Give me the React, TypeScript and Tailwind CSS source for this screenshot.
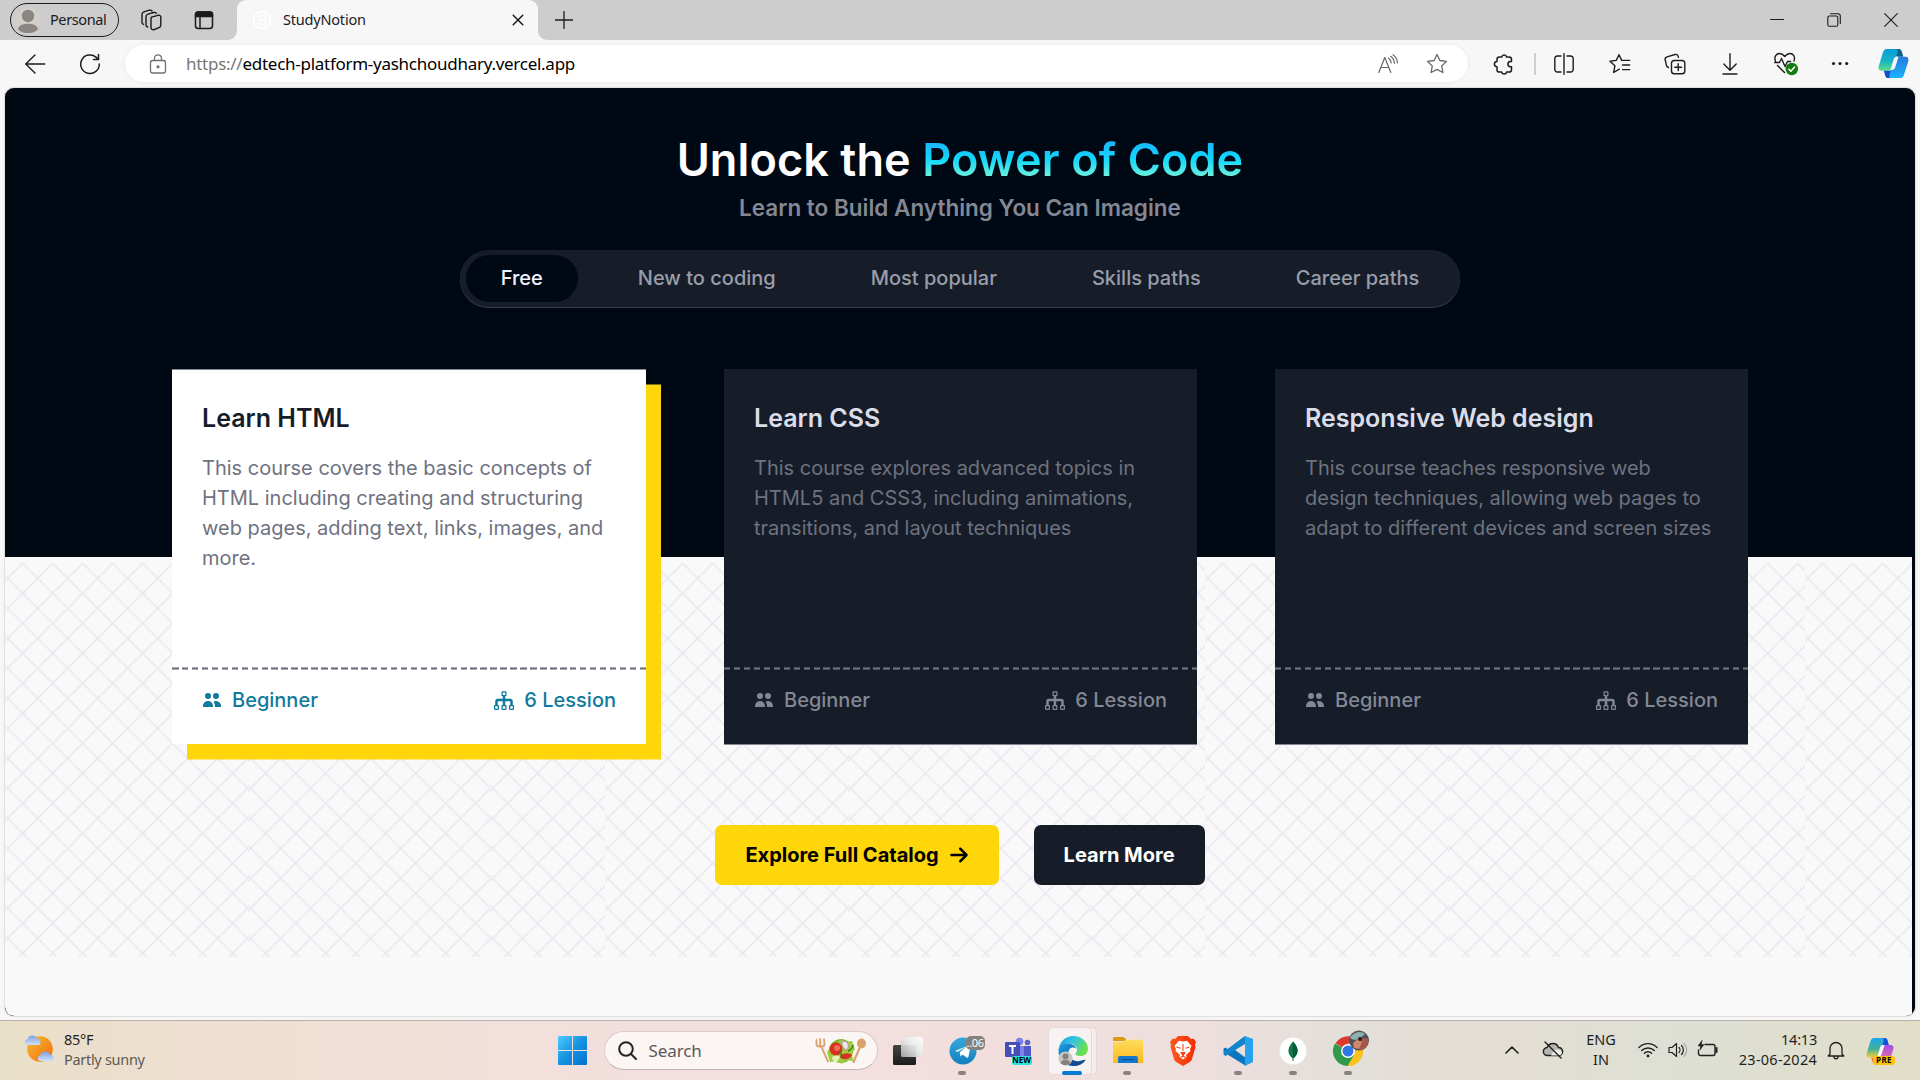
import React from "react";
import { HiUsers } from "react-icons/hi";
import { ImTree } from "react-icons/im";
import { FaArrowRight } from "react-icons/fa6";

const line = {
  fill: "none",
  stroke: "currentColor",
  strokeLinecap: "round" as const,
  strokeLinejoin: "round" as const,
};

function Cell({ className, children }: { className: string; children?: React.ReactNode }) {
  return <div className={"flex h-full shrink-0 items-center justify-center " + className}>{children}</div>;
}

/* ---------- Browser tab strip ---------- */

function TabStrip() {
  return (
    <div className="flex h-10 w-full items-center bg-[#cdcdcd] text-[#1b1b1b]">
      <div className="ml-[10px] flex h-[34px] w-[109px] shrink-0 items-center rounded-full border-[1.5px] border-[#1b1b1b] pl-[4px]">
        <svg width="26" height="26" viewBox="0 0 26 26" className="shrink-0">
          <circle cx="13" cy="13" r="13" fill="#d3d0cc" />
          <circle cx="13" cy="9" r="6.2" fill="#8b8682" />
          <path d="M3 22.2C3.600 18.500 7.500 16.800 13 16.800s9.400 1.700 10 5.400A13 13 0 0 1 13 26a13 13 0 0 1-10-3.800z" fill="#8b8682" />
        </svg>
        <span className="ml-[9px] text-[14.5px] tracking-[-0.4px]">Personal</span>
      </div>
      <Cell className="ml-[20px] w-6">
        <svg width="24" height="24" viewBox="0 0 24 24" {...line} strokeWidth="1.4">
          <path d="M12.500 9.200 19 7.300c1.500-.4 2.800.3 2.800 1.900v8c0 1.300-.6 2-1.800 2.400l-4.700 1.900c-1.800.6-3.300-.2-3.300-1.900v-8.700c0-.9.200-1.500.5-1.700z" />
          <path d="M8.700 19c-1.200-.3-1.700-1-1.700-2.100V8.800c0-1.400.7-2.200 2-2.600l5.700-1.700c1.200-.3 2.100 0 2.600.8" />
          <path d="M4.500 16.400C3.400 16 3 15.300 3 14.300V6.500c0-1.400.6-2.200 1.900-2.600l5.500-1.700c1.200-.3 2 0 2.600.8" />
        </svg>
      </Cell>
      <Cell className="ml-[31px] w-5">
        <svg width="20" height="20" viewBox="0 0 20 20" {...line} strokeWidth="1.500">
          <rect x="1.500" y="2" width="17" height="16.500" rx="2.800" />
          <path d="M1.500 5.500V4.500A2.500 2.500 0 0 1 4 2h12a2.500 2.500 0 0 1 2.500 2.500v2h-17z" fill="currentColor" />
          <path d="M6 7v11" />
        </svg>
      </Cell>
      <div className="ml-[13px] flex h-10 w-[322px] shrink-0">
        <svg width="10" height="40" viewBox="0 0 10 40" className="shrink-0">
          <path d="M0 40c6 0 10-4 10-10v10z" fill="#f7f7f7" />
        </svg>
        <div className="flex h-10 w-[301px] items-center rounded-t-[9px] bg-[#f7f7f7]">
          <svg width="20" height="20" viewBox="0 0 20 20" className="ml-[15px] shrink-0" {...line} stroke="#fff" strokeWidth="1.6">
            <circle cx="10" cy="10" r="8.500" strokeDasharray="5 1.500" />
            <path d="M13.500 6.600C12 5 7 5 7 7.800c0 3 6.200 1.500 6.200 4.600 0 2.700-5 2.700-6.800.8" />
          </svg>
          <span className="ml-[11px] text-[14.500px] tracking-[-0.200px]">StudyNotion</span>
          <svg width="12" height="12" viewBox="0 0 12 12" className="ml-auto mr-[14px]" {...line} strokeWidth="1.5">
            <path d="M1.200 1.200l9.600 9.600M10.800 1.200 1.200 10.800" />
          </svg>
        </div>
        <svg width="10" height="40" viewBox="0 0 10 40" className="shrink-0">
          <path d="M10 40C4 40 0 36 0 30v10z" fill="#f7f7f7" />
        </svg>
      </div>
      <svg width="18" height="18" viewBox="0 0 18 18" className="ml-[6px] shrink-0" {...line} strokeWidth="1.3">
        <path d="M9 .5v17M.5 9h17" />
      </svg>
      <div className="ml-auto flex h-full items-center">
        <Cell className="w-[57px]">
          <svg width="14" height="14" viewBox="0 0 14 14" {...line} strokeWidth="1.1"><path d="M.5 6.500h13" /></svg>
        </Cell>
        <Cell className="w-[57px]">
          <svg width="14" height="14" viewBox="0 0 14 14" {...line} strokeWidth="1.100">
            <rect x=".8" y="3" width="10" height="10.200" rx="1.500" />
            <path d="M3.500.8H11A2.300 2.300 0 0 1 13.300 3v7.500" />
          </svg>
        </Cell>
        <Cell className="w-[58px]">
          <svg width="14" height="14" viewBox="0 0 14 14" {...line} strokeWidth="1.100"><path d="m.7.7 12.600 12.600M13.300.7.7 13.300" /></svg>
        </Cell>
      </div>
    </div>
  );
}

/* ---------- Browser toolbar ---------- */

const starPath = "M11 1.500l2.900 6 6.600.9-4.800 4.600 1.200 6.500L11 16.400l-5.900 3.100 1.200-6.500L1.500 8.400l6.600-.9z";

function Toolbar() {
  return (
    <div className="flex h-12 w-full items-center bg-[#f7f7f7] pb-px text-[#1d1d1d]">
      <Cell className="ml-[23px] w-6">
        <svg width="22" height="22" viewBox="0 0 22 22" {...line} strokeWidth="1.400"><path d="M11 2 1.700 11l9.300 9M2 11h18.700" /></svg>
      </Cell>
      <Cell className="ml-[31px] w-6">
        <svg width="22" height="22" viewBox="0 0 22 22" {...line} strokeWidth="1.500"><path d="M20.300 11A9.300 9.300 0 1 1 17 4.100l2.500 2.400M19.500 1.500v5h-5" /></svg>
      </Cell>
      <div className="ml-[23px] flex h-[37px] w-[1343px] shrink-0 items-center rounded-full bg-white shadow-[0_0_4px_rgba(0,0,0,0.07)]">
        <svg width="18" height="20" viewBox="0 0 18 20" className="ml-[24px]" {...line} stroke="#707070" strokeWidth="1.300">
          <rect x="1.500" y="6.500" width="15" height="12.500" rx="2.200" />
          <path d="M5.500 6.500V4.300a3.500 3.500 0 0 1 7 0v2.200" />
          <circle cx="9" cy="12.800" r="1" fill="#707070" />
        </svg>
        <span className="ml-[19px] whitespace-nowrap text-[17px] tracking-[-0.270px] text-black"><span className="text-[#767676]">https://</span>edtech-platform-yashchoudhary.vercel.app</span>
        <svg width="20" height="20" viewBox="0 0 20 20" className="ml-auto mr-[28px]" {...line} stroke="#666" strokeWidth="1.200">
          <path d="M.8 18.500 6.800 3.500l6 15M2.800 13.500h8" />
          <path d="M10.500 4c1.600 1.200 2.500 2.800 2.700 5M12.700 2.300c2.300 1.700 3.500 4 3.700 7M15 .8c2.800 2 4.200 4.500 4.400 8" />
        </svg>
        <svg width="22" height="22" viewBox="0 0 22 22" className="mr-[20px]" {...line} stroke="#666" strokeWidth="1.300"><path d={starPath} /></svg>
      </div>
      <Cell className="ml-[25px] w-[22px]">
        <svg width="22" height="22" viewBox="0 0 22 22" {...line} strokeWidth="1.500">
          <path d="M4 6.500c0-1.500.9-2.400 2.300-2.400h2.400a2.500 2.500 0 0 1 4.900 0h2.500c1.500 0 2.400.9 2.400 2.400v2h-1a2.600 2.600 0 0 0 0 5.200h1v3c0 1.500-.9 2.400-2.400 2.400h-2.500a2.500 2.500 0 0 1-4.900 0H6.300C4.900 19.100 4 18.200 4 16.700v-3a2.600 2.600 0 0 1 0-5.200z" />
        </svg>
      </Cell>
      <div className="ml-[19px] h-[22px] w-[2px] bg-[#cfcfcf]" />
      <Cell className="ml-[17px] w-[22px]">
        <svg width="22" height="22" viewBox="0 0 22 22" {...line} strokeWidth="1.400">
          <path d="M8 3H4.500A2.700 2.700 0 0 0 1.800 5.700v10.600A2.700 2.700 0 0 0 4.500 19H8M14 3h3.500a2.700 2.700 0 0 1 2.700 2.700v10.600a2.700 2.700 0 0 1-2.700 2.700H14M11 .8v20.400" />
        </svg>
      </Cell>
      <Cell className="ml-[34px] w-[22px]">
        <svg width="22" height="22" viewBox="0 0 22 22" {...line} strokeWidth="1.400">
          <path d="M10.300 16.200 4.700 19.500l1.200-6.700L1 8.300l6.200-.9L10 1.700l2.700 5.700h8M13.500 12h7.200M13.500 16.600h7.200" />
        </svg>
      </Cell>
      <Cell className="ml-[33px] w-[22px]">
        <svg width="22" height="22" viewBox="0 0 22 22" {...line} strokeWidth="1.400">
          <rect x="7.500" y="7.500" width="13.300" height="13.300" rx="2.800" />
          <path d="M14.200 10.800v6.800M10.800 14.200h6.800M4.500 14.500c-1-.2-1.600-.8-1.900-1.700L1.200 7c-.4-1.400.3-2.700 1.800-3.200L11 1.500c1.400-.4 2.600.2 3 1.400l.4 1.400" />
        </svg>
      </Cell>
      <Cell className="ml-[33px] w-[22px]">
        <svg width="22" height="22" viewBox="0 0 22 22" {...line} strokeWidth="1.400"><path d="M11 .8v16M4.800 11l6.200 6.200 6.200-6.200M4 21h14" /></svg>
      </Cell>
      <Cell className="ml-[32px] w-[26px]">
        <svg width="26" height="26" viewBox="0 0 26 26" {...line} strokeWidth="1.400">
          <path d="M2.500 10.500c-1.800-5 .8-8 4.200-8C9 2.500 10.500 4 11.800 5.500 13 4 14.500 2.500 16.800 2.500c3.500 0 5.700 3 4.200 7.500M4.500 14.500l7 7M1.800 11.500h4.700l2-4 3.500 8 2.500-5h3" />
          <circle cx="18.800" cy="18" r="6.200" fill="#107c10" stroke="none" />
          <path d="m15.900 18.200 2 2 3.700-4.200" stroke="#fff" strokeWidth="1.600" />
        </svg>
      </Cell>
      <Cell className="ml-[32px] w-[18px]">
        <svg width="18" height="5" viewBox="0 0 18 5" fill="currentColor"><circle cx="2.500" cy="2.500" r="1.600" /><circle cx="9" cy="2.500" r="1.600" /><circle cx="15.700" cy="2.500" r="1.600" /></svg>
      </Cell>
      <Cell className="ml-[28px] w-8"><CopilotLogo size={31} /></Cell>
    </div>
  );
}

function CopilotLogo({ size, colorful = false }: { size: number; colorful?: boolean }) {
  const id = colorful ? "cc" : "cb";
  return (
    <svg width={size} height={size} viewBox="0 0 32 32" className="shrink-0">
      <defs>
        <linearGradient id={id + "1"} x1="0" y1="0" x2="0" y2="1">
          <stop offset="0" stopColor={colorful ? "#1ba8f0" : "#0a9bdc"} />
          <stop offset=".55" stopColor={colorful ? "#3faf9b" : "#16b5c4"} />
          <stop offset="1" stopColor={colorful ? "#f6cf35" : "#5be08a"} />
        </linearGradient>
        <linearGradient id={id + "2"} x1="0" y1="0" x2="0" y2="1">
          <stop offset="0" stopColor={colorful ? "#a64ce8" : "#2a78dd"} />
          <stop offset="1" stopColor={colorful ? "#f57a85" : "#16b4fb"} />
        </linearGradient>
      </defs>
      <path d="M17 1h4.500c2 0 2.700 1.500 3.200 3l1.500 5H20c-2.500 0-3.500-2-4-4z" fill={colorful ? "#1450d8" : "#0b5f8c"} />
      <path d="M15 31h-4.500c-2 0-2.700-1.500-3.200-3L6 23h6c2.500 0 3.500 2 4 4z" fill={colorful ? "#f06a4a" : "#1648d0"} />
      <path d="M9 1h9.500c2.300 0 2 2 1.500 4l-4.500 15c-.7 2.300-2 3.500-4.500 3.500H4c-3 0-4-2-3.200-5L5 5c.8-2.600 1.800-4 4-4z" fill={`url(#${id}1)`} />
      <path d="M23 31h-9.500c-2.300 0-2-2-1.500-4l4.500-14.500C17.200 10 18.500 9 21 9h7c3 0 4 2 3.200 5L27 27c-.8 2.600-1.800 4-4 4z" fill={`url(#${id}2)`} />
      <path d="M13.500 20.500 16 12c.6-2 1.500-3 3.500-3h1.700l-3 9.500c-.7 2.500-1.700 4.300-4.200 4.300h-1.500z" fill="#f7f7f7" />
    </svg>
  );
}

/* ---------- Web page ---------- */

const tabs = ["Free", "New to coding", "Most popular", "Skills paths", "Career paths"];

const cards = [
  {
    title: "Learn HTML",
    text: "This course covers the basic concepts of HTML including creating and structuring web pages, adding text, links, images, and more.",
    active: true,
  },
  {
    title: "Learn CSS",
    text: "This course explores advanced topics in HTML5 and CSS3, including animations, transitions, and layout techniques",
    active: false,
  },
  {
    title: "Responsive Web design",
    text: "This course teaches responsive web design techniques, allowing web pages to adapt to different devices and screen sizes",
    active: false,
  },
];

function CourseCard({ title, text, active }: { title: string; text: string; active: boolean }) {
  return (
    <div className={"flex h-[375px] flex-col " + (active ? "w-[474px] bg-white shadow-[15px_15.5px_0_0_#ffd60a]" : "w-[473px] bg-[#161d29] shadow-[0_1px_0_0_#838894]")}>
      <div className={"flex h-[298px] flex-col px-[30px] " + (active ? "border-t border-[#838894] pt-[31px]" : "pt-[32px]")}>
        <h3 className={"text-[25px] font-semibold leading-[35px] " + (active ? "text-[#161d29]" : "text-[#dbddea]")}>{title}</h3>
        <p className="mt-[17px] text-[20px] leading-[30px] text-[#6e727f]">{text}</p>
      </div>
      <div className="h-[3px] bg-[repeating-linear-gradient(90deg,#6e727f_0_6.500px,transparent_6.500px_9.950px)] [mask-image:linear-gradient(rgba(0,0,0,0.6)_0_1px,black_1px_2px,rgba(0,0,0,0.6)_2px)]" />
      <div className={"flex justify-between px-[30px] pt-[15px] text-[20px] font-medium leading-[30px] " + (active ? "text-[#0f7a9d]" : "text-[#838894]")}>
        <div className="flex items-center gap-[10px]"><HiUsers size={20} /><span>Beginner</span></div>
        <div className="flex items-center gap-[10px]"><ImTree size={20} /><span>6 Lession</span></div>
      </div>
    </div>
  );
}

const hatchSegments = [
  [0, 243], [243, 242], [485, 115],
  [600, 243], [843, 242], [1085, 115],
  [1200, 243], [1443, 242], [1685, 115],
  [1800, 107],
];

function Hatch() {
  return (
    <svg width="1907" height="394" viewBox="0 0 1907 394" className="absolute left-0 top-[475px]">
      <defs>
        <pattern id="hatch" width="30" height="30" patternUnits="userSpaceOnUse" x="2.700" y="0.300">
          <path d="M-2-2 32 32M-2 32 32-2" transform="translate(-15)" stroke="#e7e7f0" strokeWidth="1.500" />
          <path d="M-2-2 32 32M-2 32 32-2" transform="translate(15)" stroke="#e7e7f0" strokeWidth="1.500" />
        </pattern>
      </defs>
      {hatchSegments.map(([x, w]) => (
        <g key={x} transform={`translate(${x})`}><rect width={w} height="394" fill="url(#hatch)" /></g>
      ))}
    </svg>
  );
}

function Page() {
  return (
    <div className="mx-[5px] h-[928px] w-[1910px] overflow-hidden rounded-[9px] bg-[#000814] pr-[3px] shadow-[0_0_2px_rgba(0,0,0,0.35)]" style={{ fontFamily: "Inter, sans-serif" }}>
      <div className="relative h-[928px] overflow-hidden rounded-bl-[9px] bg-[#f9f9f9]">
        <div className="absolute left-0 top-0 h-[469px] w-full bg-[#000814]" />
        <Hatch />
        <div className="relative flex w-[1910px] flex-col items-center pt-[45px]">
          <h1 className="text-[45px] font-semibold leading-[54px] tracking-[0.1px] text-white">
            Unlock the <span className="bg-[linear-gradient(#1fa2ff,#12d8fa,#a6ffcb)] bg-clip-text text-transparent">Power of Code</span>
          </h1>
          <p className="mt-[3px] text-[22.5px] font-semibold leading-[35px] text-[#838894]">Learn to Build Anything You Can Imagine</p>
          <div className="mt-[25px] flex h-[57px] items-center gap-[25px] rounded-full bg-[#161d29] px-[5.5px] text-[20px] font-medium text-[#999daa] shadow-[0_1px_0_rgba(255,255,255,0.22)]">
            {tabs.map((t, i) => (
              <div key={t} className={"flex h-[47px] items-center rounded-full px-[35px] pb-[2px] " + (i === 0 ? "bg-[#000814] text-[#f1f2ff]" : "")}>{t}</div>
            ))}
          </div>
          <div className="mt-[62px] flex w-[1576px] justify-between">
            {cards.map((c) => <CourseCard key={c.title} {...c} />)}
          </div>
          <div className="mt-[81px] flex gap-[35px] text-[20px] font-bold leading-[30px]">
            <div className="flex h-[60px] items-center gap-[10px] rounded-[7px] bg-[#ffd60a] px-[30px] text-black">Explore Full Catalog <FaArrowRight size={20} /></div>
            <div className="flex h-[60px] items-center rounded-[7px] bg-[#161d29] px-[30px] text-white">Learn More</div>
          </div>
        </div>
      </div>
    </div>
  );
}

/* ---------- Taskbar ---------- */

function Weather() {
  const cloud = "M3 11a3 3 0 0 1 .6-5.900A5 5 0 0 1 13 4.500 3.400 3.400 0 0 1 14.500 11z";
  return (
    <svg width="32" height="30" viewBox="0 0 32 30" className="shrink-0">
      <defs>
        <linearGradient id="sun" x1="0" y1="0" x2="1" y2="1"><stop offset="0" stopColor="#f7bd32" /><stop offset="1" stopColor="#f06a10" /></linearGradient>
        <linearGradient id="cloud" x1="0" y1="0" x2="0" y2="1"><stop offset="0" stopColor="#7da0e0" /><stop offset="1" stopColor="#cfe0fa" /></linearGradient>
      </defs>
      <circle cx="16" cy="15" r="12.800" fill="url(#sun)" />
      <path d={cloud} fill="url(#cloud)" />
      <path d={cloud} transform="translate(13 16)" fill="url(#cloud)" />
    </svg>
  );
}

function Salad() {
  return (
    <svg width="52" height="28" viewBox="0 0 52 28" className="shrink-0">
      <path d="M1.500 3v4c0 1.500 1 2.500 2.500 2.500h3C8.500 9.500 9.500 8.500 9.500 7L9 2.500M5.200 2v7M6 9 13 24.500" stroke="#dba26c" strokeWidth="1.900" strokeLinecap="round" fill="none" />
      <ellipse cx="46.500" cy="6.500" rx="4.500" ry="5" fill="#dba26c" />
      <path d="M45 10 38.500 25" stroke="#dba26c" strokeWidth="2.200" strokeLinecap="round" />
      <circle cx="26" cy="14" r="12" fill="#7fb52e" />
      <path d="M12 15l5-8 5 1 3-6 6 3 6-1 3 8-3 4 1 8-7-1-4 4-5-3-7 1z" fill="#9dcc3f" />
      <circle cx="21" cy="12" r="6.500" fill="#d8321f" /><circle cx="22" cy="11" r="3" fill="#ef7055" />
      <path d="M25 19c4-4 10-3 12-1-2 4-6 5-10 4z" fill="#d8321f" />
      <path d="M27 5c5-3 8 3 5 8-3-1-5-3-5-8z" fill="#efe3ee" stroke="#b787b7" strokeWidth=".8" />
      <path d="M17 20c3-2 6-2 8 0l-3 5c-3 0-5-2-5-5z" fill="#e6f0bb" />
      <path d="M33 14c3-1 5-4 5-6M24 15c2 0 3 3 2 6" stroke="#417a19" strokeWidth="1.500" fill="none" />
    </svg>
  );
}

function TaskApp({ children, mark = "none" }: { children: React.ReactNode; mark?: "none" | "dot" | "active" }) {
  return (
    <div className="relative flex h-[60px] w-[55.1px] shrink-0 items-center justify-center">
      {mark === "active" && <div className="absolute left-[3px] top-[6px] h-[48px] w-[49px] rounded-[5px] border border-[#e4d6d6] bg-[#f7ecec]" />}
      {mark === "active" && <div className="absolute left-[3px] top-[6px] h-[48px] w-[44px] rounded-[5px] border border-[#e6dada] bg-[#f9f2f2]" />}
      <div className="relative flex items-center justify-center">{children}</div>
      {mark === "dot" && <div className="absolute bottom-[6px] left-[23px] h-[4px] w-[8px] rounded-full bg-[#8a8280]" />}
      {mark === "active" && <div className="absolute bottom-[6px] left-[17px] h-[4px] w-[20px] rounded-full bg-[#0078d4]" />}
    </div>
  );
}

function Apps() {
  return (
    <div className="ml-[2.500px] flex">
      <TaskApp>
        <svg width="32" height="30" viewBox="0 0 32 30">
          <defs>
            <linearGradient id="tv1" x1="0" y1="0" x2="0" y2="1"><stop offset="0" stopColor="#444" /><stop offset="1" stopColor="#1c1c1c" /></linearGradient>
            <linearGradient id="tv2" x1="0" y1="1" x2="1" y2="0"><stop offset="0" stopColor="#aaa" /><stop offset=".5" stopColor="#e6e6e6" /><stop offset="1" stopColor="#fff" /></linearGradient>
          </defs>
          <rect x="1" y="9" width="23" height="20" rx="1.500" fill="url(#tv1)" />
          <rect x="9" y="1" width="22" height="20" rx="1.500" fill="url(#tv2)" opacity=".93" />
        </svg>
      </TaskApp>
      <TaskApp mark="dot">
        <svg width="28" height="28" viewBox="0 0 28 28">
          <defs><linearGradient id="tg" x1="0" y1="0" x2="0" y2="1"><stop offset="0" stopColor="#35a9de" /><stop offset="1" stopColor="#1480bd" /></linearGradient></defs>
          <circle cx="14" cy="14" r="13.500" fill="url(#tg)" />
          <path d="M6 14 20.500 8c1-.4 1.500.2 1.200 1.300l-2.300 10.500c-.2 1-.9 1.200-1.700.7l-4.200-3-2 2-.8-4.200 7-6-9 5.500z" fill="#fff" />
        </svg>
        <span className="absolute left-[17px] top-[-1px] flex h-[14px] w-[19px] items-center justify-center rounded-[5px] bg-[#85817f] text-[11px] leading-none tracking-[-0.3px] text-white">..06</span>
      </TaskApp>
      <TaskApp>
        <svg width="28" height="28" viewBox="0 0 28 28">
          <circle cx="15.500" cy="4.500" r="3.800" fill="#7b83eb" /><circle cx="23.500" cy="5.500" r="2.800" fill="#5a62c3" />
          <path d="M9 9h12v16h-5a7 7 0 0 1-7-7z" fill="#7b83eb" /><path d="M20 9h7v10a6 6 0 0 1-7 5z" fill="#5059c9" />
          <rect x="1" y="5" width="15" height="15" rx="1" fill="#464eb8" />
          <path d="M5 9h7M8.500 9v8" stroke="#fff" strokeWidth="2" />
        </svg>
        <span className="absolute left-[8px] top-[19px] flex h-[9px] w-[20px] items-center justify-center rounded-[2px] bg-[#2de2e0] text-[8px] font-bold leading-none text-black">NEW</span>
      </TaskApp>
      <TaskApp mark="active">
        <svg width="30" height="30" viewBox="0 0 30 30">
          <defs>
            <linearGradient id="e1" x1="0" y1="0" x2="1" y2=".5"><stop offset="0" stopColor="#1c9de0" /><stop offset=".5" stopColor="#35c5df" /><stop offset="1" stopColor="#6ee04a" /></linearGradient>
            <linearGradient id="e2" x1="0" y1="0" x2="1" y2="1"><stop offset="0" stopColor="#1b9de2" /><stop offset="1" stopColor="#0c59a4" /></linearGradient>
          </defs>
          <path d="M1 12C2 5 8 0 15 0c9 0 15 6.500 15 12.500 0 5-3.500 7.500-7.500 7.500-3.500 0-5-1-5-2s1.500-1.500 1.500-4c0-3-3-6.500-8.500-6.500S2 10 1 12z" fill="url(#e1)" />
          <path d="M.5 14C1 9.500 5 7.500 9 7.500c5 0 8 2 9 5-4-2.500-7.500 0-7.500 4.500C10.500 25 17 29 22 28c-2 1.500-4.500 2-7 2C6.500 30 0 23 .5 14z" fill="url(#e2)" />
          <path d="M10.500 16c0 7 6 10 11 9 2.500-.5 5-2 6-1-1.500 3-6 6-12 6-6-1-8-8-5-14z" fill="#124c91" />
          <circle cx="7.500" cy="22.500" r="7" fill="#c9c7c5" /><circle cx="7.500" cy="20.500" r="3" fill="#85807c" />
          <path d="M2.500 27c.7-2.500 3-3 5-3s4.300.5 5 3c-3 3-7 3-10 0z" fill="#85807c" />
        </svg>
      </TaskApp>
      <TaskApp mark="dot">
        <svg width="30" height="27" viewBox="0 0 30 27">
          <defs><linearGradient id="fo" x1="0" y1="0" x2="0" y2="1"><stop offset="0" stopColor="#ffdc5e" /><stop offset="1" stopColor="#fbb91e" /></linearGradient></defs>
          <path d="M0 1.500C0 .7.600 0 1.500 0h8c1 0 1.800.5 2.500 1.300L14 4H0z" fill="#d99b10" />
          <path d="M0 5h10l2.500-2.200H29c.6 0 1 .4 1 1V26H0z" fill="url(#fo)" />
          <path d="M5 26v-5a2 2 0 0 1 2-2h16a2 2 0 0 1 2 2v5z" fill="#1379cf" /><path d="M9 22.500h12" stroke="#0b4f8c" strokeWidth="1.200" />
        </svg>
      </TaskApp>
      <TaskApp>
        <svg width="26" height="30" viewBox="0 0 26 30">
          <defs><linearGradient id="br" x1="0" y1="0" x2="1" y2="0"><stop offset="0" stopColor="#fb5a1e" /><stop offset="1" stopColor="#f52b02" /></linearGradient></defs>
          <path d="M8 0h10l3 3 2.500-.5L26 6l-1 3 .5 2-3.500 12c-.5 1.800-1.500 2.500-3 3.500L13 30l-6-3.500c-1.500-1-2.500-1.700-3-3.500L.5 11 1 9 0 6l2.500-3.500L5 3z" fill="url(#br)" />
          <path d="M13 5.500l4-.8 4.500 5.300-1.500 3 .5 2-4.500 4 .5 2-3.500 2.500-3.500-2.500.5-2-4.500-4 .5-2L4.500 10 9 4.700z" fill="#fff" />
          <path d="M13 8v7M13 20l2-3.500h-4zM6.500 11l4 1.200M19.500 11l-4 1.200M13 20l-2.500 1.500M13 20l2.500 1.500" stroke="#f94414" strokeWidth="1.100" fill="#f94414" />
        </svg>
      </TaskApp>
      <TaskApp mark="dot">
        <svg width="30" height="30" viewBox="0 0 30 30">
          <path d="M22 0 6.500 14.500 2.500 11.500.5 12.500V16L23 30V22L8 11z" fill="#0a76c0" />
          <path d="M22 8 2.500 20 .5 18.500V16L22 0z" fill="#1285cf" />
          <path d="M22 0l8 3v23l-8 4z" fill="#27a3ee" />
        </svg>
      </TaskApp>
      <TaskApp mark="dot">
        <svg width="28" height="28" viewBox="0 0 28 28">
          <circle cx="14" cy="14" r="13.700" fill="#fff" stroke="#e4dede" strokeWidth=".5" />
          <path d="M14 4.500c3.500 4 5 7 4.500 10.500-.4 3-2.500 5-4 6.300V24h-1v-2.700c-1.500-1.300-3.600-3.300-4-6.300C9 11.500 10.500 8.500 14 4.500z" fill="#11774b" />
          <path d="M14 4.500c3.500 4 5 7 4.500 10.500-.4 3-2.500 5-4.500 6.300z" fill="#065a38" />
        </svg>
      </TaskApp>
      <TaskApp mark="dot">
        <svg width="36" height="36" viewBox="0 0 36 36" className="-mt-[6px] ml-[6px]">
          <path d="M15 21 2.500 13.200A15 15 0 0 1 28 13.500H15z" fill="#db3a2d" />
          <path d="M15 21 2 13.500A15 15 0 0 0 15 36l6.500-11z" fill="#2f9a49" />
          <path d="M15 13.800h13.200A15 15 0 0 1 14.500 36L21.500 24.500z" fill="#fbc11d" />
          <circle cx="15" cy="21" r="7" fill="#fff" /><circle cx="15" cy="21" r="5.500" fill="#3177e8" />
          <circle cx="26" cy="10.500" r="10" fill="#4d5354" />
          <path d="M17 8c3-6 11-8 15-4l-6 5-5 1z" fill="#8fb0ae" /><path d="M24 14c2-6 8-7 11-5 1 5-2 10-6 11-3 0-5-3-5-6z" fill="#a4574a" />
          <path d="M20 13l5-4 4 3-3 7-5-1z" fill="#d0866a" /><circle cx="27" cy="9" r="2" fill="#2a2020" />
        </svg>
      </TaskApp>
    </div>
  );
}

function Tray() {
  return (
    <div className="ml-auto flex h-full items-center text-[#1f1f1f]">
      <Cell className="w-[20px]"><svg width="14" height="8" viewBox="0 0 14 8" {...line} strokeWidth="1.600" className="-mt-px"><path d="M1 7l6-6 6 6" /></svg></Cell>
      <Cell className="ml-[20px] w-[22px]">
        <svg width="22" height="18" viewBox="0 0 22 18" {...line} strokeWidth="1.400" className="-mt-px">
          <path d="M5.500 14.500a4 4 0 0 1-.3-8A6 6 0 0 1 16.500 6.500a4 4 0 0 1 .3 8z" fill="#b5b5b0" />
          <path d="M9 14.500l3-5c3-2 7-1 8 2-.5 2-1.700 3-3.500 3z" fill="#efefea" stroke="none" />
          <path d="M3 1l16 16" />
        </svg>
      </Cell>
      <Cell className="ml-[20px] w-[34px] flex-col pb-[3px] text-center text-[14.500px] leading-[20px]"><span>ENG</span><span>IN</span></Cell>
      <Cell className="ml-[20px] w-[20px]">
        <svg width="20" height="16" viewBox="0 0 20 16" {...line} strokeWidth="1.400" className="-mt-[2px]">
          <path d="M1 5.500a12.500 12.500 0 0 1 18 0M3.700 8.500a9 9 0 0 1 12.600 0M6.400 11.300a5 5 0 0 1 7.200 0" /><circle cx="10" cy="14" r="1.400" fill="currentColor" stroke="none" />
        </svg>
      </Cell>
      <Cell className="ml-[10px] w-[20px]">
        <svg width="20" height="16" viewBox="0 0 20 16" {...line} strokeWidth="1.200" className="-mt-[2px]">
          <path d="M1 5.500h3L8.500 1.500v13L4 10.500H1zM11 5.500c1.300 1.300 1.300 3.700 0 5M13.500 3.500c2.500 2.500 2.500 6.500 0 9" /><path d="M16 1.500c3.500 3.500 3.500 9.500 0 13" stroke="#aaa" />
        </svg>
      </Cell>
      <Cell className="ml-[9px] w-[21px]">
        <svg width="21" height="18" viewBox="0 0 21 18" {...line} strokeWidth="1.400" className="-mt-[3px]">
          <path d="M8 4.500h8a2 2 0 0 1 2 2v7a2 2 0 0 1-2 2H3.500a2 2 0 0 1-2-2V10" /><path d="M19.500 8v4" strokeWidth="2" /><path d="M5 .5 1 6h2.500L3 10l4-5.500H4.500z" fill="currentColor" strokeWidth=".5" />
        </svg>
      </Cell>
      <div className="ml-[9px] flex w-[90px] flex-col items-end whitespace-nowrap pb-[4px] text-[14.500px] leading-[20px]"><span className="tracking-[-0.200px]">14:13</span><span className="tracking-[0.250px]">23-06-2024</span></div>
      <Cell className="ml-[9px] w-[20px]">
        <svg width="18" height="19" viewBox="0 0 18 19" {...line} strokeWidth="1.300" className="-mt-px"><path d="M3 13V7.500a6 6 0 0 1 12 0V13l1.800 2H1.200zM6.800 15.500c.3 3 4.100 3 4.400 0" /></svg>
      </Cell>
      <div className="relative ml-[20px] mr-[25px] h-[28px] w-[29px]">
        <CopilotLogo size={28} colorful />
        <span className="absolute left-[7px] top-[19px] flex h-[9px] w-[22px] items-center justify-center rounded-[3px] bg-[#fcc40c] text-[8px] font-bold leading-none tracking-[0.400px] text-black">PRE</span>
      </div>
    </div>
  );
}

function Taskbar() {
  return (
    <div className="flex h-[60px] w-full items-center border-t border-[#b9b0ac] bg-[linear-gradient(90deg,#e9e0c8_0%,#eedfd0_10%,#f1e0d8_22%,#f3dfdf_36%,#f2dfdd_52%,#ecdfde_63%,#e3dfd9_71%,#e3ded3_78%,#dddfd5_88%,#e2dfc8_100%)]">
      <div className="flex w-[558px] shrink-0 items-center pb-[3px] pl-[24px]">
        <Weather />
        <div className="ml-[8px] text-[14.500px] leading-[20px] tracking-[-0.300px] text-[#1f1f1f]"><div>85°F</div><div className="text-[#5d5955]">Partly sunny</div></div>
      </div>
      <svg width="29" height="29" viewBox="0 0 29 29" className="shrink-0">
        <defs><linearGradient id="win" gradientUnits="userSpaceOnUse" x1="0" y1="0" x2="29" y2="29"><stop offset="0" stopColor="#4dcdff" /><stop offset=".5" stopColor="#1592e0" /><stop offset="1" stopColor="#0471d2" /></linearGradient></defs>
        <path d="M1 0h13v14H0V1a1 1 0 0 1 1-1zM15 0h13a1 1 0 0 1 1 1v13H15zM0 15h14v14H1a1 1 0 0 1-1-1zM15 15h14v13a1 1 0 0 1-1 1H15z" fill="url(#win)" />
      </svg>
      <div className="ml-[16.500px] flex h-[39px] w-[274px] shrink-0 items-center rounded-full border border-[#dccbcb] border-b-[#c4b5b5] bg-[#fbf5f4] pl-[13px] pr-[10px]">
        <svg width="19" height="19" viewBox="0 0 19 19" {...line} stroke="#252525" strokeWidth="2"><circle cx="8" cy="8" r="6.800" /><path d="m13 13 5 5" /></svg>
        <span className="ml-[12px] text-[17px] tracking-[-0.1px] text-[#5c5857]">Search</span>
        <div className="ml-auto"><Salad /></div>
      </div>
      <Apps />
      <Tray />
    </div>
  );
}

export default function App() {
  return (
    <div className="flex h-[1080px] w-[1920px] flex-col overflow-hidden bg-[#f7f7f7]" style={{ fontFamily: '"Noto Sans", "Open Sans", sans-serif' }}>
      <TabStrip />
      <Toolbar />
      <Page />
      <div className="h-[4px] shrink-0" />
      <Taskbar />
    </div>
  );
}
